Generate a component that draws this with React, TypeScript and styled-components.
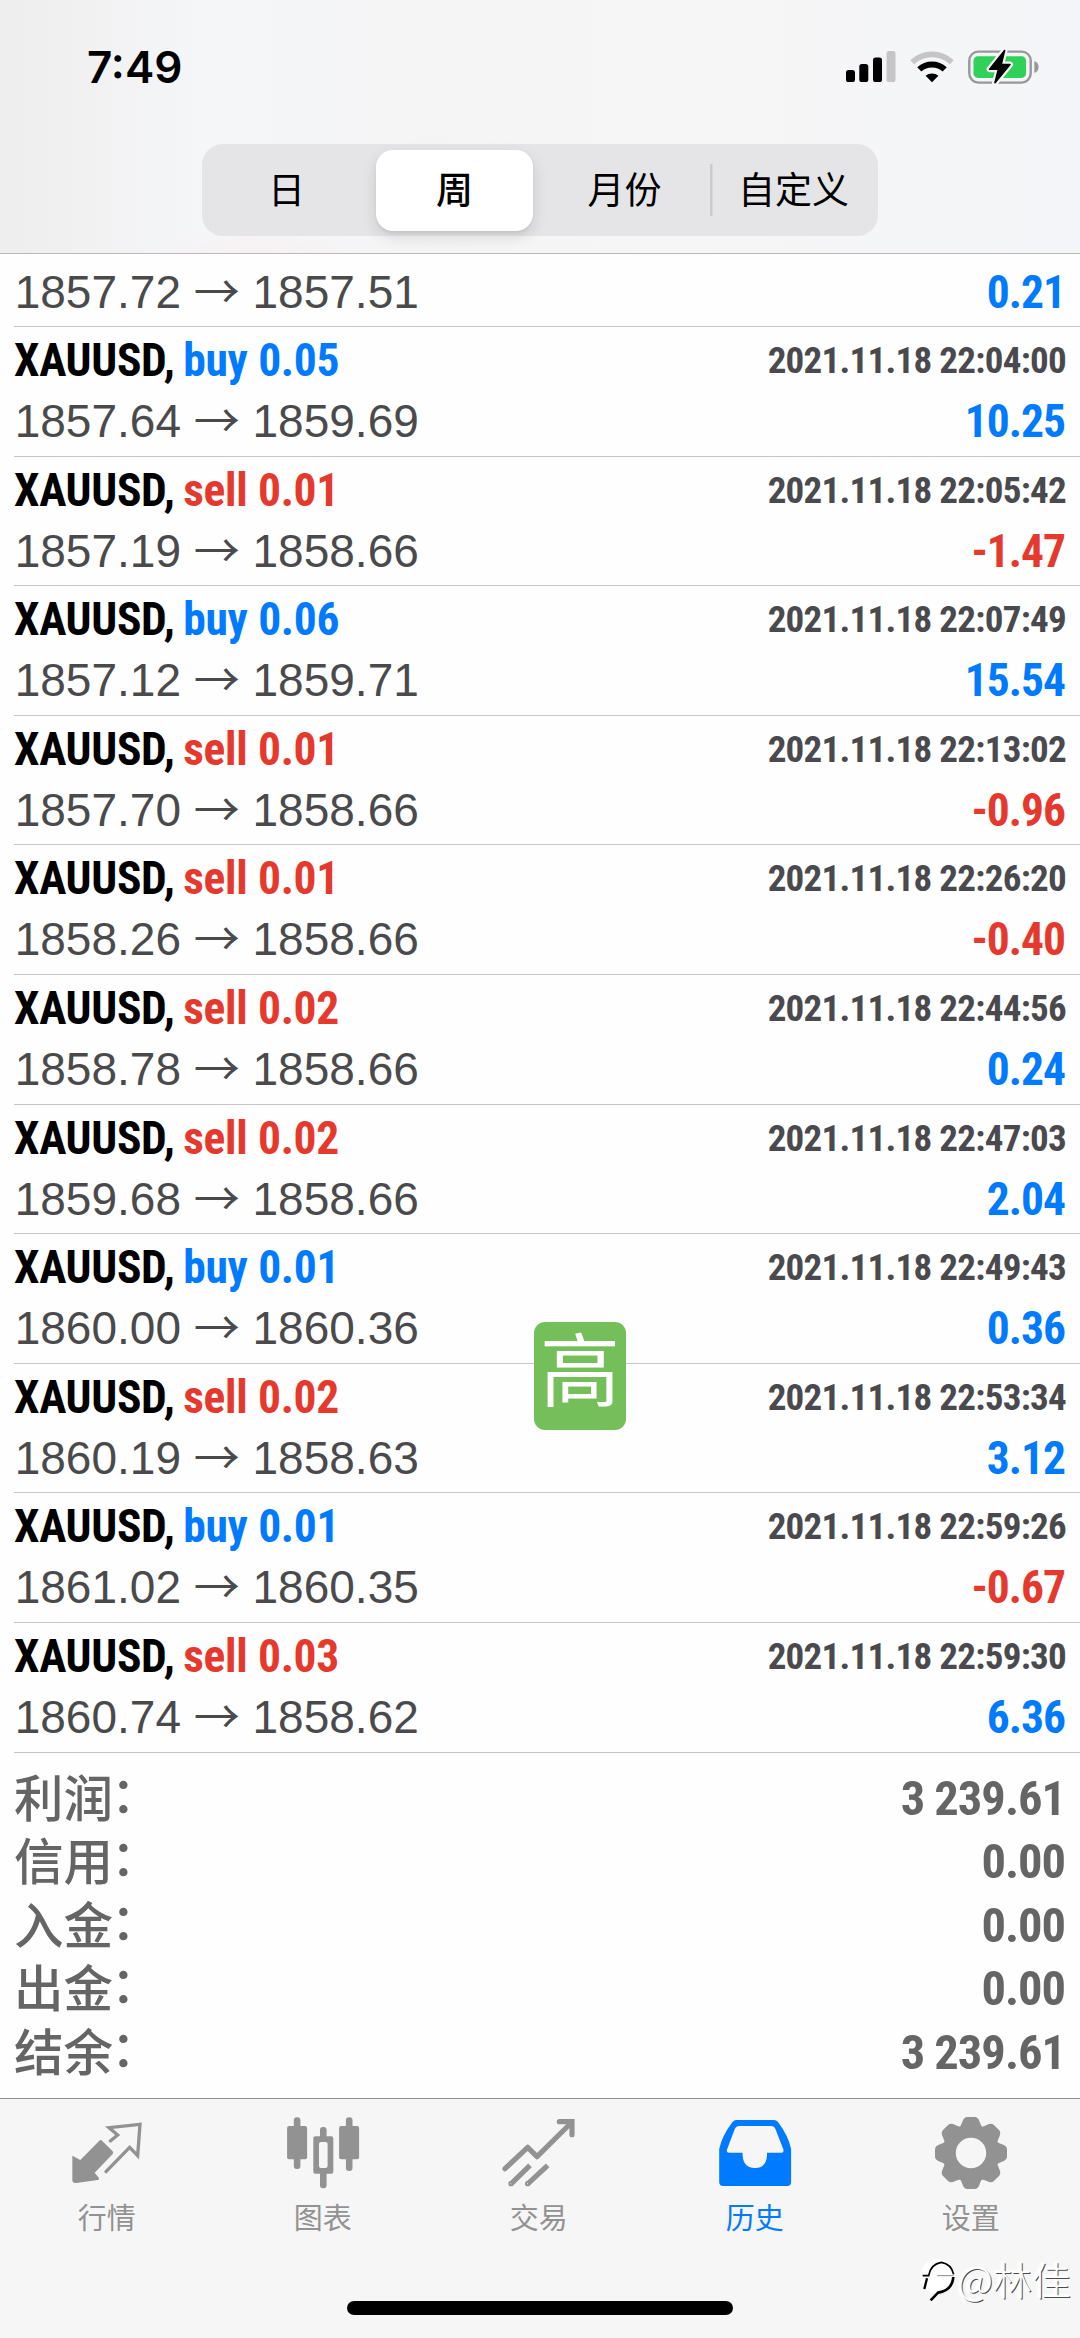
import React from "react";
import styled, { createGlobalStyle } from "styled-components";

const BLUE = "#007aff";
const RED = "#e5392e";
const GREY = "#929292";
const CJK = '"Noto Sans CJK SC", "Noto Sans", sans-serif';
const CONDENSED = '"Roboto Condensed", Roboto, "Noto Sans CJK SC", sans-serif';

const GlobalStyle = createGlobalStyle`
  * { box-sizing: border-box; }
  body { margin: 0; background: #fff; }
`;

const Screen = styled.div`
  position: relative;
  display: flex;
  flex-direction: column;
  width: 1080px;
  height: 2338px;
  overflow: hidden;
  background: #fefefe;
  font-family: ${CJK};
`;

/* ---------- header ---------- */

const Header = styled.header`
  display: flex;
  flex-direction: column;
  flex: none;
  height: 254px;
  border-bottom: 1.5px solid #b9b9bb;
  background:
    radial-gradient(ellipse 110px 26px at 255px 254px, #f8f0f2, rgba(248, 240, 242, 0)),
    linear-gradient(90deg, #eeeeef 0, #f1f1f2 90px, #f5f6f8 200px, #f5f5f6 430px, #f6f6f6 660px, #f4f5f8 1080px);
`;

const StatusBar = styled.div`
  display: flex;
  justify-content: space-between;
  align-items: center;
  height: 144px;
  padding: 0 41px 11px 87px;
`;

const Clock = styled.span`
  font: 600 44px/50px Inter, sans-serif;
  color: #000;
`;

const StatusIcons = styled.div`
  display: flex;
  align-items: center;
  gap: 14px;
`;

const Segments = styled.div`
  display: grid;
  grid-template-columns: 167px 169px 171px 167px;
  align-self: flex-start;
  width: 676px;
  height: 92px;
  margin-left: 202px;
  padding: 0 1px;
  border-radius: 21px;
  background: #e5e5e7;
`;

const Segment = styled.button<{ $active?: boolean; $divided?: boolean }>`
  display: flex;
  align-items: center;
  justify-content: center;
  margin: ${(p) => (p.$active ? "5.5px 6px" : "0")};
  padding: 0 0 5px;
  border: 0;
  border-radius: 17px;
  color: #000;
  font: ${(p) => (p.$active ? 500 : 400)} 37px/54px ${CJK};
  background: ${(p) =>
    p.$active
      ? "#fff"
      : p.$divided
        ? "linear-gradient(#cbcbcd, #cbcbcd) 0 50% / 2.5px 52px no-repeat"
        : "none"};
  box-shadow: ${(p) => (p.$active ? "0 6px 16px rgba(0, 0, 0, 0.12), 0 2px 3px rgba(0, 0, 0, 0.06)" : "none")};
`;

/* ---------- deals ---------- */

const DealList = styled.main`
  position: relative;
  flex: none;
`;

const DealRow = styled.section<{ $partial?: boolean }>`
  display: flex;
  flex-direction: column;
  justify-content: flex-end;
  height: ${(p) => (p.$partial ? "73px" : "129.6px")};
  margin-left: 14px;
  padding: 0 14px 3.5px 0;
  border-bottom: 1.5px solid #c6c6c8;
`;

const Line = styled.div<{ $height: number }>`
  display: flex;
  justify-content: space-between;
  align-items: center;
  height: ${(p) => p.$height}px;
  line-height: ${(p) => p.$height}px;
  white-space: pre;
`;

const Title = styled.span`
  font-family: ${CONDENSED};
  font-weight: 700;
  font-size: 45.5px;
  letter-spacing: -0.33px;
  color: #000;
`;

const Side = styled.span<{ $tone: string }>`
  margin-left: -1.5px;
  word-spacing: 0.6px;
  color: ${(p) => p.$tone};
`;

const Time = styled.time`
  font-family: ${CONDENSED};
  font-weight: 700;
  font-size: 37px;
  letter-spacing: -0.72px;
  color: #4a4a4e;
`;

const Prices = styled.span`
  margin-left: 0.7px;
  font-family: "Liberation Sans", Arial, sans-serif;
  font-size: 46px;
  color: #4a4a4d;
`;

const Arrow = styled.span`
  font-family: ${CJK};
  font-weight: 400;
  line-height: 0;
`;

const Profit = styled.span<{ $tone: string }>`
  margin-right: 1px;
  font-family: ${CONDENSED};
  font-weight: 700;
  font-size: 45.5px;
  letter-spacing: -1px;
  color: ${(p) => p.$tone};
`;

const HighBadge = styled.div`
  position: absolute;
  left: 534px;
  top: 1068px;
  width: 92px;
  height: 108px;
  border-radius: 11px;
  background: #75bf5b;
  color: #fff;
  font: 400 80px/86px ${CJK};
  text-align: center;
`;

/* ---------- summary ---------- */

const Summary = styled.section`
  flex: 1;
  padding: 14.5px 14px 0;
`;

const SummaryRow = styled.div`
  display: flex;
  justify-content: space-between;
  align-items: flex-start;
  height: 63.4px;
  color: #656565;
`;

const SummaryLabel = styled.span`
  display: flex;
  font: 500 49.5px/57px ${CJK};
`;

const Colon = styled.span`
  margin-left: -2px;
  line-height: 50px;
`;

const SummaryValue = styled.span`
  margin-right: 1px;
  font: 700 48.5px/63.4px ${CONDENSED};
  letter-spacing: -1px;
`;

/* ---------- tab bar ---------- */

const Footer = styled.footer`
  position: relative;
  display: flex;
  flex-direction: column;
  align-items: center;
  flex: none;
  height: 240px;
  border-top: 1.5px solid #8f8f91;
  background: #f6f6f6;
`;

const Tabs = styled.nav`
  display: grid;
  grid-template-columns: repeat(5, 216px);
  width: 1080px;
  height: 202px;
  padding-top: 5.5px;
`;

const Tab = styled.a<{ $active?: boolean }>`
  display: flex;
  flex-direction: column;
  align-items: center;
  padding-right: 2.5px;
  color: ${(p) => (p.$active ? BLUE : GREY)};
`;

const TabLabel = styled.span`
  margin-top: 1px;
  font: 400 29px/40px ${CJK};
`;

const HomeIndicator = styled.div`
  width: 386px;
  height: 14px;
  border-radius: 7px;
  background: #000;
`;

const Watermark = styled.div`
  position: absolute;
  right: 9px;
  bottom: 23px;
  display: flex;
  align-items: flex-start;
  height: 60px;
`;

const WatermarkText = styled.span`
  font: 300 39px/46px ${CJK};
  color: #fff;
  text-shadow: 1px 1px 0 #4c4c4c, -1px -1px 1px #fff, -2px 0 2px #fff;
`;

/* ---------- drawings ---------- */

const Signal = () => (
  <svg width="50" height="33" viewBox="0 0 50 33">
    <rect x="0" y="20" width="9" height="12" rx="2.6" />
    <rect x="13.3" y="14" width="9" height="18" rx="2.6" />
    <rect x="27" y="7.5" width="9" height="24.5" rx="2.6" />
    <rect x="40.5" y="1" width="9" height="31" rx="2.6" fill="#c5c5c7" />
  </svg>
);

const Wifi = () => (
  <svg width="44" height="33" viewBox="0 0 44 33" fill="none">
    <path d="M2.2 12.2A29 29 0 0 1 41.8 12.2" stroke="#c5c5c7" strokeWidth="5.6" />
    <path d="M9.3 19.4A18.8 18.8 0 0 1 34.7 19.4" stroke="#000" strokeWidth="6" />
    <path d="M22 32.3L15.6 25.8A10 10 0 0 1 28.4 25.8Z" fill="#000" />
  </svg>
);

const Battery = () => (
  <svg width="71" height="36" viewBox="0 0 71 36">
    <rect x="1.3" y="2.6" width="61.4" height="31" rx="9" fill="none" stroke="#98989b" strokeWidth="2.4" />
    <rect x="5.5" y="7.3" width="52.5" height="21.6" rx="4.5" fill="#30d158" />
    <path d="M66.3 12Q70.6 13.6 70.6 18T66.3 24Z" fill="#98989b" />
    <path d="M36.6 1.6L21.6 20.2H30.4L27 33.8L42 15.6H33.2Z" fill="#f5f5f7" stroke="#f5f5f7" strokeWidth="6" strokeLinejoin="round" />
    <path d="M36.6 1.6L21.6 20.2H30.4L27 33.8L42 15.6H33.2Z" stroke="#000" strokeWidth="1.6" strokeLinejoin="round" />
  </svg>
);

const QuotesIcon = () => (
  <svg width="100" height="90" viewBox="-10 0 300 270">
    <path
      d="M36 152L60 165L117 107Q121 103 125 107L157 139Q161 143 157 147L103 203L114 217Q119 224 112 225L48 234Q36 235 36 226Z"
      fill="currentColor"
    />
    <path
      d="M150 108L172 90L146 68L239 58L232 152L208 127L137 200"
      fill="none"
      stroke="currentColor"
      strokeWidth="10"
      strokeLinecap="round"
    />
  </svg>
);

const ChartIcon = () => (
  <svg width="100" height="90" viewBox="0 0 100 90" fill="currentColor">
    <rect x="20.8" y="12.3" width="6.6" height="51.7" rx="3" />
    <rect x="14.1" y="21" width="20" height="33.3" rx="2" />
    <rect x="47" y="22" width="6.6" height="14" rx="3" />
    <rect x="47" y="66" width="6.6" height="17.3" rx="3" />
    <path
      fillRule="evenodd"
      d="M42.3 31.3H58.3Q60.3 31.3 60.3 33.3V66.7Q60.3 68.7 58.3 68.7H42.3Q40.3 68.7 40.3 66.7V33.3Q40.3 31.3 42.3 31.3ZM48 37Q46 37 46 39V61Q46 63 48 63H52.6Q54.6 63 54.6 61V39Q54.6 37 52.6 37Z"
    />
    <rect x="72.9" y="12.3" width="6.6" height="53.7" rx="3" />
    <rect x="66.1" y="21" width="20" height="33.3" rx="2" />
  </svg>
);

const TradeIcon = () => (
  <svg width="100" height="90" viewBox="-3 0 300 270" fill="none" stroke="currentColor" strokeWidth="15.5">
    <path d="M45 191L113 127L141 155L243 54" strokeLinecap="round" strokeLinejoin="round" />
    <path d="M208 50H246V89" strokeLinecap="round" />
    <path d="M64 236L120 181M114 236L173 181" />
    <circle cx="63" cy="236" r="3" strokeWidth="10" />
    <circle cx="113" cy="236" r="3" strokeWidth="10" />
  </svg>
);

const HistoryIcon = () => (
  <svg width="100" height="90" viewBox="0 0 100 90" fill="currentColor">
    <path
      fillRule="evenodd"
      d="M27.5 17Q29 15 31.5 15H68.8Q71.3 15 73 17Q83.5 31 86.1 44V77Q86.1 81 82.1 81H18.2Q14.2 81 14.2 77V44Q16.8 31 27.5 17ZM34.5 21Q31 21 29.8 24L22 44.5Q21.2 47.7 24 47.7H37.6V50.5Q38.5 63 50 63Q61.3 63 62 50.5V47.7H76.5Q79.2 47.7 78.4 44.5L70.4 24Q69.3 21 66 21Z"
    />
  </svg>
);

const GearIcon = () => (
  <svg width="100" height="90" viewBox="-50 -48 100 90" fill="currentColor">
    <circle r="21.7" fill="none" stroke="currentColor" strokeWidth="13" />
    {[0, 45, 90, 135, 180, 225, 270, 315].map((angle) => (
      <path
        key={angle}
        transform={`rotate(${angle})`}
        d="M-13 -24Q-9.6 -27.5 -8.7 -31Q-7.2 -36 -3.6 -36H3.6Q7.2 -36 8.7 -31Q9.6 -27.5 13 -24Z"
      />
    ))}
  </svg>
);

const WatermarkLogo = () => (
  <svg width="47" height="60" viewBox="3 0 141 180" fill="none" stroke="#000">
    <circle cx="82" cy="64" r="52" fill="#fff" stroke="none" />
    <path d="M38 62H56Q62 27 94 22Q124 27 131 58" strokeWidth="5" />
    <path d="M51 70L43 102" strokeWidth="7" />
    <path d="M130 66Q127 106 84 113L62 136" strokeWidth="8" />
    <path d="M82 62H131" stroke="#8a8a8a" strokeWidth="3" />
  </svg>
);

/* ---------- data ---------- */

type Deal = [side: string, lots: string, time: string, open: string, close: string, profit: string];

const deals: Deal[] = [
  ["buy", "0.05", "2021.11.18 22:04:00", "1857.64", "1859.69", "10.25"],
  ["sell", "0.01", "2021.11.18 22:05:42", "1857.19", "1858.66", "-1.47"],
  ["buy", "0.06", "2021.11.18 22:07:49", "1857.12", "1859.71", "15.54"],
  ["sell", "0.01", "2021.11.18 22:13:02", "1857.70", "1858.66", "-0.96"],
  ["sell", "0.01", "2021.11.18 22:26:20", "1858.26", "1858.66", "-0.40"],
  ["sell", "0.02", "2021.11.18 22:44:56", "1858.78", "1858.66", "0.24"],
  ["sell", "0.02", "2021.11.18 22:47:03", "1859.68", "1858.66", "2.04"],
  ["buy", "0.01", "2021.11.18 22:49:43", "1860.00", "1860.36", "0.36"],
  ["sell", "0.02", "2021.11.18 22:53:34", "1860.19", "1858.63", "3.12"],
  ["buy", "0.01", "2021.11.18 22:59:26", "1861.02", "1860.35", "-0.67"],
  ["sell", "0.03", "2021.11.18 22:59:30", "1860.74", "1858.62", "6.36"],
];

const totals = [
  ["利润", "3 239.61"],
  ["信用", "0.00"],
  ["入金", "0.00"],
  ["出金", "0.00"],
  ["结余", "3 239.61"],
];

const tabs = [
  { label: "行情", Icon: QuotesIcon },
  { label: "图表", Icon: ChartIcon },
  { label: "交易", Icon: TradeIcon },
  { label: "历史", Icon: HistoryIcon, active: true },
  { label: "设置", Icon: GearIcon },
];

const PriceLine = ({ open, close, profit }: { open: string; close: string; profit: string }) => (
  <Line $height={61}>
    <Prices>
      {open} <Arrow>→</Arrow> {close}
    </Prices>
    <Profit $tone={profit.startsWith("-") ? RED : BLUE}>{profit}</Profit>
  </Line>
);

export default function App() {
  return (
    <Screen>
      <GlobalStyle />
      <Header>
        <StatusBar>
          <Clock>7:49</Clock>
          <StatusIcons>
            <Signal />
            <Wifi />
            <Battery />
          </StatusIcons>
        </StatusBar>
        <Segments>
          <Segment>日</Segment>
          <Segment $active>周</Segment>
          <Segment>月份</Segment>
          <Segment $divided>自定义</Segment>
        </Segments>
      </Header>

      <DealList>
        <DealRow $partial>
          <PriceLine open="1857.72" close="1857.51" profit="0.21" />
        </DealRow>
        {deals.map(([side, lots, time, open, close, profit]) => (
          <DealRow key={time}>
            <Line $height={60}>
              <Title>
                XAUUSD, <Side $tone={side === "buy" ? BLUE : RED}>{side} {lots}</Side>
              </Title>
              <Time>{time}</Time>
            </Line>
            <PriceLine open={open} close={close} profit={profit} />
          </DealRow>
        ))}
        <HighBadge>高</HighBadge>
      </DealList>

      <Summary>
        {totals.map(([label, value]) => (
          <SummaryRow key={label}>
            <SummaryLabel>
              {label}
              <Colon>：</Colon>
            </SummaryLabel>
            <SummaryValue>{value}</SummaryValue>
          </SummaryRow>
        ))}
      </Summary>

      <Footer>
        <Tabs>
          {tabs.map(({ label, Icon, active }) => (
            <Tab key={label} $active={active}>
              <Icon />
              <TabLabel>{label}</TabLabel>
            </Tab>
          ))}
        </Tabs>
        <HomeIndicator />
        <Watermark>
          <WatermarkLogo />
          <WatermarkText>@林佳</WatermarkText>
        </Watermark>
      </Footer>
    </Screen>
  );
}
